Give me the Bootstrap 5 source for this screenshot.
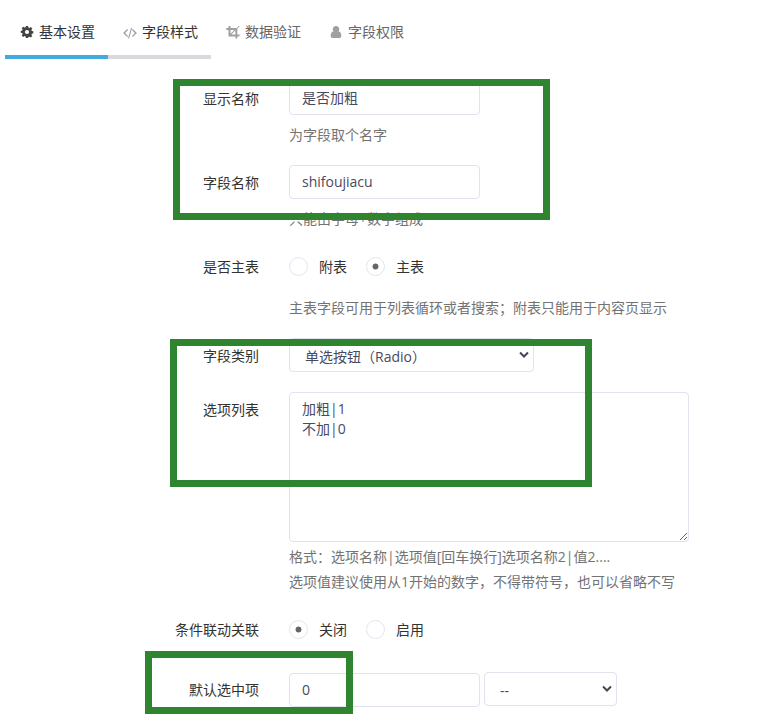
<!DOCTYPE html>
<html lang="zh-CN">
<head>
<meta charset="utf-8">
<title>字段设置</title>
<link href="https://cdn.jsdelivr.net/npm/bootstrap@5.3.0/dist/css/bootstrap.min.css" rel="stylesheet">
<style>
body{font:14px/20px "Open Sans","Noto Sans CJK SC",sans-serif;color:#333;width:779px;height:720px;overflow:hidden;background:#fff}
.tabs{padding-left:5px;height:81px}
.tabs .nav-link{width:103px;height:59px;padding:23px 0 0 15px;color:#666;border:0;border-radius:0;line-height:18px;display:flex;align-items:flex-start;white-space:nowrap}
.tabs .nav-link svg{width:14px;height:14px;margin:2px 5px 0 0;flex:none;fill:#a0a0a0}
.tabs .nav-link.active{color:#333;border-bottom:4px solid #43aadf}
.tabs .nav-link.active svg{fill:#444}
.tabs .nav-link.hovered{color:#333;border-bottom:4px solid #d9d9de}
.tabs .nav-link.hovered svg{margin-top:3px}
.field{display:flex;gap:30px;height:84px}
.field-name{width:259px;padding-top:8px;text-align:right;flex:none}
.field .form-control,.field .form-select{font-size:14px;line-height:20px;color:#4a4a5f;border:1px solid #e1e1ef;border-radius:4px;padding:6px 12px;height:34px;background-color:#fff}
.field .form-control{width:191px}
.field input.form-control{padding:5px 12px 7px}
.field .form-select{padding:8px 12px 4px 15px;background-image:none;appearance:none}
.select-wrap{position:relative}
.select-wrap svg{position:absolute;right:5px;top:13px;width:10px;height:8px;pointer-events:none}
.w-type{width:245px}.w-source{width:133px}
.field textarea.form-control{width:400px;height:150px;resize:both;display:block}
.field .default-value{margin-top:1px;padding:6px 12px}
.hint{color:#737373;margin-top:10px;white-space:nowrap}
.hint-main{margin-top:21px}
.hint-long{line-height:25px;margin-top:2px}
.radios{display:flex;padding-top:8px;height:28px}
.radios label{display:flex;width:77px;gap:11px;white-space:nowrap}
.radios input{appearance:none;width:19px;height:19px;border:1px solid #e4e4f1;border-radius:50%;margin:0;flex:none}
.radios input:checked{background:radial-gradient(circle,#666 0 2.7px,transparent 3.3px)}
.frame{position:absolute;border:7px solid #2f842f;pointer-events:none;z-index:5}
.frame-names{left:173px;top:79px;width:377px;height:141px}
.frame-options{left:170px;top:339px;width:422px;height:148px}
.frame-default{left:145px;top:651px;width:208px;height:63px}
.h-main{height:89px}.h-type{height:54px}.h-list{height:220px}.h-link{height:60px}
</style>
<script src="https://cdn.jsdelivr.net/npm/bootstrap@5.3.0/dist/js/bootstrap.bundle.min.js"></script>
</head>
<body class="position-relative">
<nav class="nav tabs flex-nowrap align-items-start">
  <a class="nav-link active"><svg viewBox="0 0 14 14"><path fill-rule="evenodd" d="M5.9 1h2.2l.3 1.6 1 .4 1.4-.9 1.5 1.5-.9 1.4.4 1 1.5.3v2.1l-1.5.3-.4 1 .9 1.4-1.5 1.5-1.4-.9-1 .4L8.1 13H5.9l-.3-1.5-1-.4-1.4.9-1.5-1.5.9-1.4-.4-1L.7 7.800V5.900l1.500-.3.4-1-.9-1.400L3.200 1.700l1.400.9 1-.4zM7 4.900a2.100 2.100 0 1 0 0 4.200 2.100 2.100 0 0 0 0-4.200z"/></svg>基本设置</a>
  <a class="nav-link hovered"><svg viewBox="0 0 14 14"><path d="M4.200 3.100l.9.9L2.100 7.100l3 3.100-.9.9L.1 7.100zM9.800 3.100l-.9.9 3 3.100-3 3.100.9.9 4.100-4zM8.100 1.700l1 .3-3 10.500-1.100-.3z"/></svg>字段样式</a>
  <a class="nav-link"><svg viewBox="0 0 14 14"><path fill-rule="evenodd" d="M2.500 1h2v2h6.200L12.900.8l.6.6-2.200 2.200v6h2.200v1.900h-2.200v2H9.400v-2H2.500V4.900H.3V3h2.200zM4.500 4.900v3.900l3.900-3.900zM9.400 5.500L5.200 9.600h4.200z"/></svg>数据验证</a>
  <a class="nav-link"><svg viewBox="0 0 14 14"><path d="M7 1a3.200 3.200 0 0 1 2.500 5.300C11.400 6.700 12.300 8.500 12.300 10.800c0 1.400-.8 2.200-1.800 2.200h-7c-1 0-1.800-.8-1.800-2.200 0-2.300.9-4.100 2.800-4.500A3.200 3.200 0 0 1 7 1z"/></svg>字段权限</a>
</nav>
<form>
  <div class="field"><label class="field-name">显示名称</label><div><input class="form-control" value="是否加粗"><div class="hint">为字段取个名字</div></div></div>
  <div class="field"><label class="field-name">字段名称</label><div><input class="form-control" value="shifoujiacu"><div class="hint">只能由字母+数字组成</div></div></div>
  <div class="field h-main"><span class="field-name">是否主表</span><div>
    <div class="radios"><label><input type="radio" name="main">附表</label><label><input type="radio" name="main" checked>主表</label></div>
    <div class="hint hint-main">主表字段可用于列表循环或者搜索；附表只能用于内容页显示</div></div></div>
  <div class="field h-type"><label class="field-name">字段类别</label><div class="select-wrap w-type"><select class="form-select"><option>单选按钮（Radio）</option></select><svg viewBox="0 0 10 8"><path d="M1 1.500l4 4 4-4" fill="none" stroke="#454558" stroke-width="2"/></svg></div></div>
  <div class="field h-list"><label class="field-name">选项列表</label><div><textarea class="form-control">加粗|1
不加|0</textarea><div class="hint hint-long">格式：选项名称|选项值[回车换行]选项名称2|值2....<br>选项值建议使用从1开始的数字，不得带符号，也可以省略不写</div></div></div>
  <div class="field h-link"><span class="field-name">条件联动关联</span>
    <div class="radios"><label><input type="radio" name="link" checked>关闭</label><label><input type="radio" name="link">启用</label></div></div>
  <div class="field"><label class="field-name">默认选中项</label><div class="d-flex gap-1"><input class="form-control default-value" value="0"><div class="select-wrap w-source"><select class="form-select"><option>--</option></select><svg viewBox="0 0 10 8"><path d="M1 1.500l4 4 4-4" fill="none" stroke="#454558" stroke-width="2"/></svg></div></div></div>
</form>
<div class="frame frame-names"></div>
<div class="frame frame-options"></div>
<div class="frame frame-default"></div>
</body>
</html>
